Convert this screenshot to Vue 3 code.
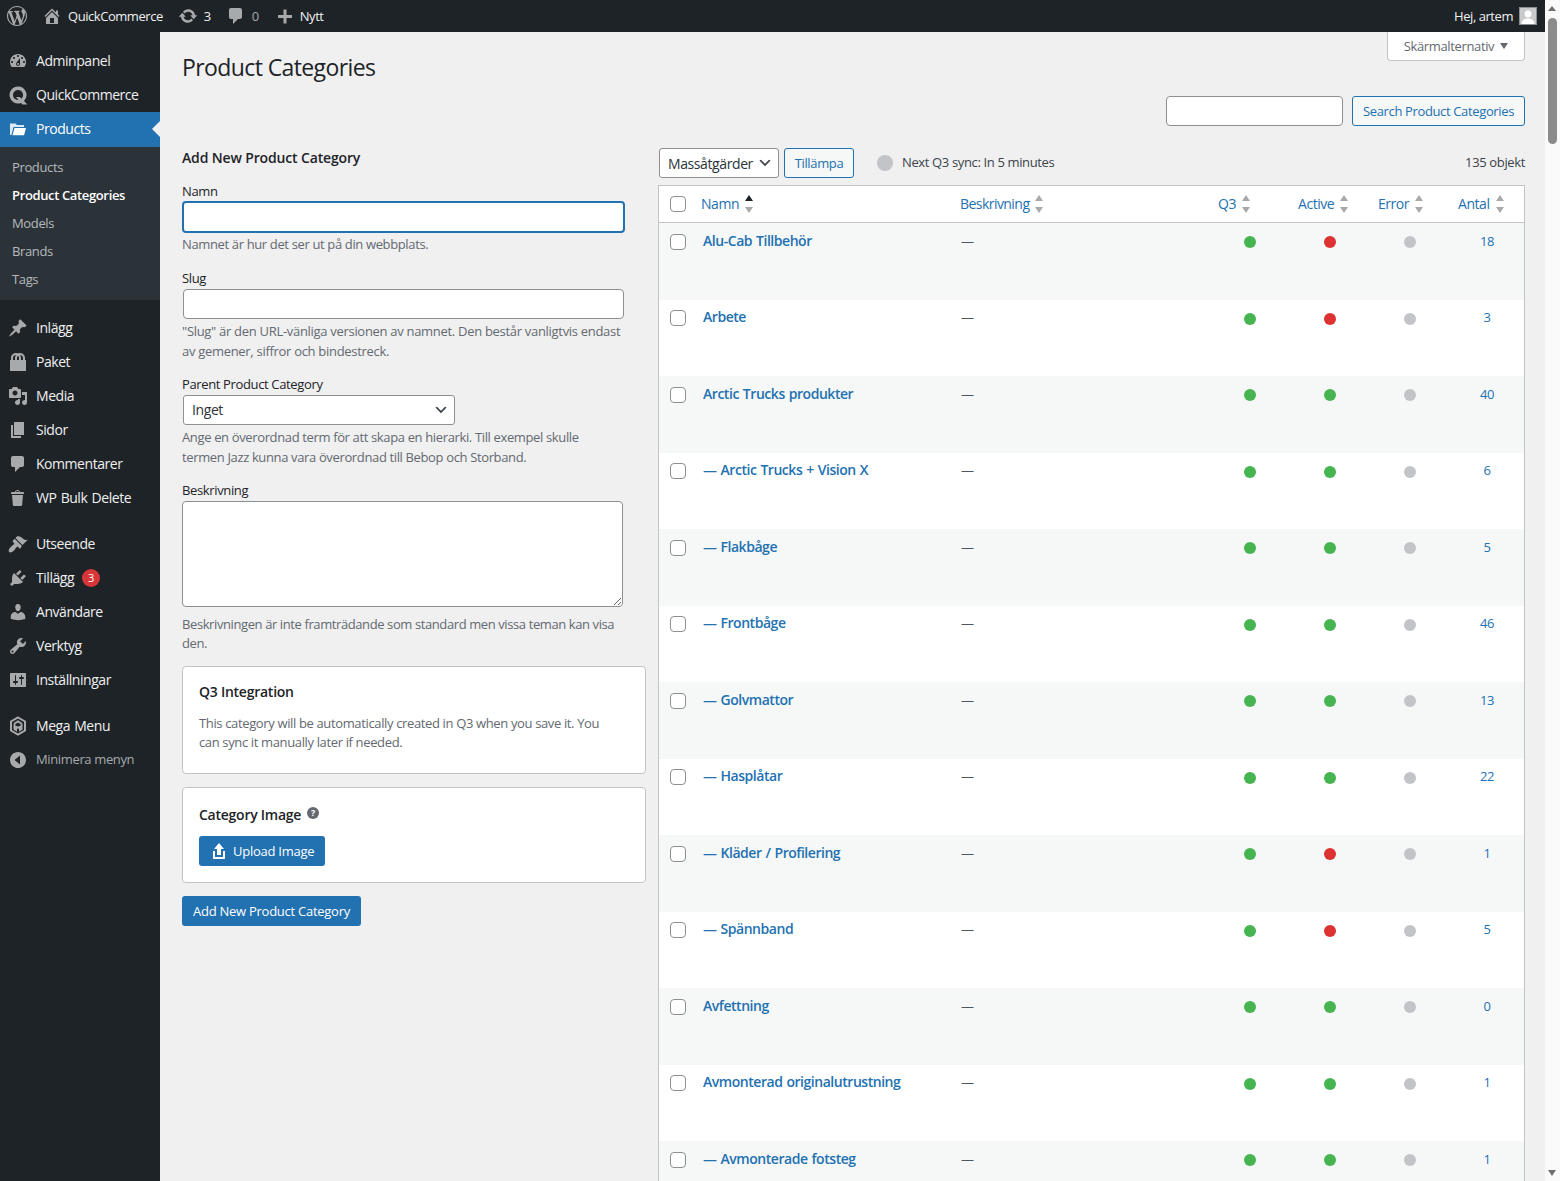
<script setup>
const P = {
  dash: "M3.76 16h12.48c1.1-1.37 1.76-3.11 1.76-5 0-4.42-3.58-8-8-8s-8 3.58-8 8c0 1.89.66 3.63 1.76 5zM10 4c.55 0 1 .45 1 1s-.45 1-1 1-1-.45-1-1 .45-1 1-1zM6 6c.55 0 1 .45 1 1s-.45 1-1 1-1-.45-1-1 .45-1 1-1zm8 0c.55 0 1 .45 1 1s-.45 1-1 1-1-.45-1-1 .45-1 1-1zm-5.37 5.55L12 7v6c0 1.1-.9 2-2 2s-2-.9-2-2c0-.57.24-1.08.63-1.45zM4 10c.55 0 1 .45 1 1s-.45 1-1 1-1-.45-1-1 .45-1 1-1zm12 0c.55 0 1 .45 1 1s-.45 1-1 1-1-.45-1-1 .45-1 1-1zm-5 3c0-.55-.45-1-1-1s-1 .45-1 1 .45 1 1 1 1-.45 1-1z",
  pin: "M10.44 3.02l1.82-1.82 6.36 6.35-1.83 1.82c-1.05-.68-2.48-.57-3.41.36l-.75.75c-.92.93-1.04 2.35-.35 3.41l-1.83 1.82-2.41-2.41-2.8 2.79c-.42.42-3.38 2.71-3.8 2.29s1.86-3.39 2.28-3.81l2.79-2.79L4.1 9.36l1.83-1.82c1.05.69 2.48.57 3.4-.36l.75-.75c.93-.92 1.05-2.35.36-3.41z",
  bag: "M17 8h1v11H2V8h1V6c0-2.76 2.24-5 5-5 .71 0 1.39.15 2 .42.61-.27 1.29-.42 2-.42 2.76 0 5 2.24 5 5v2zM5 6v2h2V6c0-1.13.39-2.16 1.02-3H8C6.35 3 5 4.35 5 6zm10 2V6c0-1.65-1.35-3-3-3h-.02c.63.84 1.02 1.87 1.02 3v2h2zm-5-4.22C9.39 4.33 9 5.12 9 6v2h2V6c0-.88-.39-1.67-1-2.22z",
  media: "M13 11V4c0-.55-.45-1-1-1h-1.67L9 1H5L3.67 3H2c-.55 0-1 .45-1 1v7c0 .55.45 1 1 1h10c.55 0 1-.45 1-1zM7 4.5c1.38 0 2.5 1.12 2.5 2.5S8.38 9.5 7 9.5 4.5 8.38 4.5 7 5.62 4.5 7 4.5zM14 6h5v10.5c0 1.38-1.12 2.5-2.5 2.5S14 17.88 14 16.5s1.12-2.5 2.5-2.5c.17 0 .34.02.5.05V9h-3V6zm-4 8.05V13h2v3.5c0 1.38-1.12 2.5-2.5 2.5S7 17.88 7 16.5 8.12 14 9.5 14c.17 0 .34.02.5.05z",
  page: "M6 15V2h10v13H6zm-1 1h8v2H3V5h2v11z",
  comment: "M5 2h9c1.1 0 2 .9 2 2v7c0 1.1-.9 2-2 2h-2l-5 5v-5H5c-1.1 0-2-.9-2-2V4c0-1.1.9-2 2-2z",
  trash: "M12 4h3c.6 0 1 .4 1 1v1H3V5c0-.6.5-1 1-1h3c.2-1.1 1.3-2 2.5-2s2.3.9 2.5 2zM8 4h3c-.2-.6-.9-1-1.5-1S8.2 3.4 8 4zM4 7h11l-.9 10.1c0 .5-.5.9-1 .9H5.9c-.5 0-.9-.4-1-.9L4 7z",
  brush: "M14.48 11.06L7.41 3.99l1.5-1.5c.5-.56 2.3-.47 3.51.32 1.21.8 1.43 1.28 2.91 2.1 1.18.64 2.45 1.26 4.45.85zm-.71.71L6.7 4.7 4.93 6.47c-.39.39-.39 1.02 0 1.41l1.06 1.06c.39.39.39 1.03 0 1.42-.6.6-1.43 1.11-2.21 1.69-.35.26-.7.53-1.01.84-1.34 1.35-2.77 3.13-1.77 5.12.04.04.07.07.1.1 1.99 1 3.77-.43 5.12-1.77.31-.31.58-.66.84-1.01.58-.78 1.09-1.61 1.69-2.21.39-.39 1.03-.39 1.42 0l1.06 1.06c.39.39 1.02.39 1.41 0z",
  plug: "M13.11 4.36L9.87 7.6 8 5.73l3.24-3.24c.35-.34 1.05-.2 1.56.32.52.51.66 1.21.31 1.55zm-8 1.77l.91-1.12 9.01 9.01-1.19.84c-.71.71-2.63 1.16-3.82 1.16H6.14L4.9 17.26c-.59.59-1.54.59-2.12 0-.59-.58-.59-1.53 0-2.12l1.24-1.24v-3.88c0-1.13.4-3.19 1.09-3.89zm7.26 3.97l3.24-3.24c.34-.35 1.04-.21 1.55.31.52.51.66 1.21.31 1.55l-3.24 3.25z",
  user: "M10 9.25c-2.27 0-2.73-3.44-2.73-3.44C7 4.02 7.82 2 9.97 2c2.16 0 2.98 2.02 2.71 3.81 0 0-.41 3.44-2.68 3.44zm0 2.57L12.72 10c2.39 0 4.52 2.33 4.52 4.53v2.49s-3.65 1.13-7.24 1.13c-3.65 0-7.24-1.13-7.24-1.13v-2.49c0-2.25 1.94-4.48 4.47-4.48z",
  tools: "M16.68 9.77c-1.34 1.34-3.3 1.67-4.95.99l-5.41 6.52c-.99.99-2.59.99-3.58 0s-.99-2.59 0-3.57l6.52-5.42c-.68-1.65-.35-3.61.99-4.95 1.28-1.28 3.12-1.62 4.72-1.06l-2.89 2.89 2.82 2.82 2.86-2.87c.53 1.58.18 3.39-1.08 4.65zM3.81 16.21c.4.39 1.04.39 1.43 0 .4-.4.4-1.04 0-1.43-.39-.4-1.03-.4-1.43 0-.39.39-.39 1.03 0 1.43z",
  settings: "M18 16V4c0-.55-.45-1-1-1H3c-.55 0-1 .45-1 1v12c0 .55.45 1 1 1h14c.55 0 1-.45 1-1zM8 11h1c.55 0 1 .45 1 1s-.45 1-1 1H8v1.5c0 .28-.22.5-.5.5s-.5-.22-.5-.5V13H6c-.55 0-1-.45-1-1s.45-1 1-1h1V5.5c0-.28.22-.5.5-.5s.5.22.5.5V11zm5-2h-1c-.55 0-1-.45-1-1s.45-1 1-1h1V5.5c0-.28.22-.5.5-.5s.5.22.5.5V7h1c.55 0 1 .45 1 1s-.45 1-1 1h-1v5.5c0 .28-.22.5-.5.5s-.5-.22-.5-.5V9z",
  collapse: "M18 10c0-4.42-3.58-8-8-8s-8 3.58-8 8 3.58 8 8 8 8-3.58 8-8zm-6 4.5L6.5 10 12 5.5v9z",
  wp: "M20 10c0-5.51-4.49-10-10-10C4.48 0 0 4.49 0 10c0 5.52 4.48 10 10 10 5.51 0 10-4.48 10-10zM7.78 15.37L4.37 6.22c.55-.02 1.17-.08 1.17-.08.5-.06.44-1.13-.06-1.11 0 0-1.45.11-2.37.11-.18 0-.37 0-.58-.01C4.12 2.69 6.87 1.11 10 1.11c2.33 0 4.45.87 6.05 2.34-.68-.11-1.65.39-1.65 1.58 0 .74.45 1.36.9 2.1.35.61.55 1.36.55 2.46 0 1.49-1.4 5-1.4 5l-3.03-8.37c.54-.02.82-.17.82-.17.5-.05.44-1.25-.06-1.22 0 0-1.44.12-2.38.12-.87 0-2.33-.12-2.33-.12-.5-.03-.56 1.2-.06 1.22l.92.08 1.26 3.41zM17.41 10c.24-.64.74-1.87.43-4.25.7 1.29 1.05 2.71 1.05 4.25 0 3.29-1.73 6.24-4.4 7.78.97-2.59 1.94-5.2 2.92-7.78zM6.1 18.09C3.12 16.65 1.11 13.53 1.11 10c0-1.3.23-2.48.72-3.59C3.25 10.3 4.67 14.2 6.1 18.09zm4.03-6.63l2.58 6.98c-.86.29-1.76.45-2.71.45-.79 0-1.57-.11-2.29-.33.81-2.38 1.62-4.74 2.42-7.1z",
  home: "M16 8.5l1.53 1.53-1.06 1.06L10 4.62l-6.47 6.47-1.06-1.06L10 2.5l4 4v-2h2v4zm-6-2.46l6 5.99V18H4v-5.97zM12 17v-5H8v5h4z",
  update: "M10.2 3.28c3.53 0 6.43 2.61 6.92 6h2.08l-3.5 4-3.5-4h2.32c-.45-1.97-2.21-3.45-4.32-3.45-1.45 0-2.73.71-3.54 1.78L4.95 5.66C6.23 4.2 8.11 3.28 10.2 3.28zm-.4 13.44c-3.52 0-6.43-2.61-6.92-6H.8l3.5-4c1.17 1.33 2.33 2.67 3.5 4H5.48c.45 1.97 2.21 3.45 4.32 3.45 1.45 0 2.73-.71 3.54-1.78l1.71 1.95c-1.28 1.46-3.15 2.38-5.25 2.38z",
  plus: "M17 9v3h-5.5v5.5h-3V12H3V9h5.5V3.5h3V9H17z",
  upload: "M8 14V8H5l5-6 5 6h-3v6H8zm-2 2v-6H4v8h12.01v-8H14v6H6z",
}
const menuA = [
  { t: 'Adminpanel', i: 'dash' },
  { t: 'QuickCommerce', q: true },
]
const sub = ['Products', 'Product Categories', 'Models', 'Brands', 'Tags']
const menuB = [
  { t: 'Inlägg', i: 'pin' }, { t: 'Paket', i: 'bag' }, { t: 'Media', i: 'media' },
  { t: 'Sidor', i: 'page' }, { t: 'Kommentarer', i: 'comment' }, { t: 'WP Bulk Delete', i: 'trash' },
]
const menuC = [
  { t: 'Utseende', i: 'brush' }, { t: 'Tillägg', i: 'plug', badge: 3 }, { t: 'Användare', i: 'user' },
  { t: 'Verktyg', i: 'tools' }, { t: 'Inställningar', i: 'settings' },
]
const rows = [
  ['Alu-Cab Tillbehör', 0, 18], ['Arbete', 0, 3], ['Arctic Trucks produkter', 1, 40],
  ['— Arctic Trucks + Vision X', 1, 6], ['— Flakbåge', 1, 5], ['— Frontbåge', 1, 46],
  ['— Golvmattor', 1, 13], ['— Hasplåtar', 1, 22], ['— Kläder / Profilering', 0, 1],
  ['— Spännband', 0, 5], ['Avfettning', 1, 0], ['Avmonterad originalutrustning', 1, 1],
  ['— Avmonterade fotsteg', 1, 1],
].map(([name, active, count]) => ({ name, active, count }))
const heads = [
  { t: 'Beskrivning', c: 'h-desc' }, { t: 'Q3', c: 'h-s' }, { t: 'Active', c: 'h-s' },
  { t: 'Error', c: 'h-s' }, { t: 'Antal', c: 'h-s' },
]
</script>

<template>
  <div class="shell">
    <header class="bar">
      <div class="bar-left">
        <svg class="wp" viewBox="0 0 20 20"><path :d="P.wp" /></svg>
        <svg class="bi home" viewBox="0 0 20 20"><path :d="P.home" /></svg>
        <span class="bt site">QuickCommerce</span>
        <svg class="bi upd" viewBox="0 0 20 20"><path :d="P.update" /></svg>
        <span class="bt n3">3</span>
        <svg class="bi cmt" viewBox="0 0 20 20"><path :d="P.comment" /></svg>
        <span class="bt n0">0</span>
        <svg class="bi pls" viewBox="0 0 20 20"><path :d="P.plus" /></svg>
        <span class="bt">Nytt</span>
      </div>
      <div class="bar-right">
        <span class="bt">Hej, artem</span>
        <span class="avatar">
          <svg viewBox="0 0 16 16"><rect width="16" height="16" fill="#c9cacc" /><circle cx="8" cy="6" r="3.4" fill="#fff" /><path d="M1.5 16c.3-4 3-5.6 6.5-5.6s6.200 1.600 6.500 5.600z" fill="#fff" /></svg>
        </span>
      </div>
    </header>

    <div class="body">
      <nav class="side">
        <a v-for="m in menuA" :key="m.t" class="mi">
          <svg v-if="m.i" class="mic" viewBox="0 0 20 20"><path :d="P[m.i]" /></svg>
          <svg v-else class="mic" viewBox="0 0 20 20"><path fill-rule="evenodd" d="M10 1.500a8.500 8.500 0 1 0 3 16.450l1.500 1.550h4.800l-3.300-3.500A8.500 8.500 0 0 0 10 1.500zm0 3.500a5 5 0 0 1 3.400 8.700l-1.600-1.700H8l2.500 3H10a5 5 0 0 1 0-10z" /></svg>
          <span>{{ m.t }}</span>
        </a>
        <a class="mi cur">
          <svg class="mic" viewBox="0 0 20 20"><path opacity=".85" d="M2 3.500h5.500L9 5h7v2H5.500L3.500 15H2z" /><path d="M6.500 8H18l-2 7.300H4.500z" /></svg>
          <span>Products</span>
        </a>
        <ul class="sub">
          <li v-for="s in sub" :key="s" :class="{ on: s === 'Product Categories' }">{{ s }}</li>
        </ul>
        <div class="group g1">
          <a v-for="m in menuB" :key="m.t" class="mi">
            <svg class="mic" viewBox="0 0 20 20"><path :d="P[m.i]" /></svg>
            <span>{{ m.t }}</span>
          </a>
        </div>
        <div class="group">
          <a v-for="m in menuC" :key="m.t" class="mi">
            <svg class="mic" viewBox="0 0 20 20"><path :d="P[m.i]" /></svg>
            <span>{{ m.t }}</span>
            <b v-if="m.badge" class="badge">{{ m.badge }}</b>
          </a>
        </div>
        <div class="group">
          <a class="mi">
            <svg class="mic" viewBox="0 0 20 20">
              <path fill="none" stroke="#a7aaad" stroke-width="2" d="M10 1.500l7 4v9l-7 4-7-4v-9z" />
              <path fill="none" stroke="#a7aaad" stroke-width="2" d="M6.500 7.500l3.500-2 3.500 2M6.500 7.500v5.500l1.500 1v-3.500l2 1.300 2-1.300V14l1.500-1V7.500" />
            </svg>
            <span>Mega Menu</span>
          </a>
          <a class="mi fold">
            <svg class="mic" viewBox="0 0 20 20"><path :d="P.collapse" /></svg>
            <span>Minimera menyn</span>
          </a>
        </div>
      </nav>

      <main class="main">
        <button class="screen">Skärmalternativ <i class="tri"></i></button>
        <h1>Product Categories</h1>
        <div class="search">
          <input class="inp s-inp" />
          <button class="btn">Search Product Categories</button>
        </div>
        <div class="cols">
          <section class="form">
            <h2>Add New Product Category</h2>
            <label class="l-name">Namn</label>
            <input class="inp focus" />
            <p class="hint h1a">Namnet är hur det ser ut på din webbplats.</p>
            <label class="l-slug">Slug</label>
            <input class="inp slug" />
            <p class="hint h2a">"Slug" är den URL-vänliga versionen av namnet. Den består vanligtvis endast av gemener, siffror och bindestreck.</p>
            <label class="l-par">Parent Product Category</label>
            <div class="sel parent"><span>Inget</span><svg viewBox="0 0 20 20"><path d="M5 6l5 5 5-5 2 1-7 7-7-7z" /></svg></div>
            <p class="hint h3a">Ange en överordnad term för att skapa en hierarki. Till exempel skulle termen Jazz kunna vara överordnad till Bebop och Storband.</p>
            <label class="l-desc">Beskrivning</label>
            <textarea class="ta"></textarea>
            <p class="hint h4a">Beskrivningen är inte framträdande som standard men vissa teman kan visa den.</p>

            <div class="card q3">
              <h3>Q3 Integration</h3>
              <p>This category will be automatically created in Q3 when you save it. You can sync it manually later if needed.</p>
            </div>
            <div class="card img">
              <h3>Category Image <i class="help">?</i></h3>
              <button class="primary up">
                <svg viewBox="0 0 20 20"><path :d="P.upload" /></svg>Upload Image
              </button>
            </div>
            <button class="primary add">Add New Product Category</button>
          </section>

          <section class="list">
            <div class="tools">
              <div class="sel bulk"><span>Massåtgärder</span><svg viewBox="0 0 20 20"><path d="M5 6l5 5 5-5 2 1-7 7-7-7z" /></svg></div>
              <button class="btn apply">Tillämpa</button>
              <i class="sync"></i>
              <span class="synct">Next Q3 sync: In 5 minutes</span>
              <span class="count">135 objekt</span>
            </div>
            <div class="table">
              <div class="tr th">
                <span class="cell"><i class="cb"></i></span>
                <span class="hd h-name">Namn<i class="arrows first"></i></span>
                <span v-for="h in heads" :key="h.t" class="hd" :class="h.c">{{ h.t }}<i class="arrows"></i></span>
              </div>
              <div v-for="(r, i) in rows" :key="r.name" class="tr td" :class="{ odd: i % 2 === 0 }">
                <span class="cell rowcb"><i class="cb"></i></span>
                <a class="nm">{{ r.name }}</a>
                <span class="ds">—</span>
                <span class="dc"><i class="dot green"></i></span>
                <span class="dc"><i class="dot" :class="r.active ? 'green' : 'red'"></i></span>
                <span class="dc"><i class="dot grey"></i></span>
                <span class="ct">{{ r.count }}</span>
              </div>
            </div>
          </section>
        </div>
      </main>
    </div>

    <aside class="scroll">
      <i class="up-a"></i>
      <i class="thumb"></i>
      <i class="down-a"></i>
    </aside>
  </div>
</template>

<style>
html, body { margin: 0; height: 100%; overflow: hidden; background: #f0f0f1; }
</style>

<style scoped>
.shell {
  position: relative;
  width: 1560px; height: 1181px; overflow: hidden;
  font-family: "Open Sans", "Noto Sans", sans-serif;
  font-size: 13px; color: #3c434a; background: #f0f0f1;
  letter-spacing: -0.36px;
}
svg { fill: currentColor; display: block; flex: none; }
h1, h2, h3, p, ul { margin: 0; padding: 0; }
button { font: inherit; letter-spacing: inherit; cursor: pointer; }
i { font-style: normal; }

.bar {
  width: 1545px; height: 32px; background: #1d2327; color: #f0f0f1;
  display: flex; justify-content: space-between; align-items: center;
  letter-spacing: -0.45px;
}
.bar-left, .bar-right { display: flex; align-items: center; }
.bt { line-height: 32px; }
.wp { width: 20px; height: 20px; margin-left: 7px; color: #a7aaad; }
.bi { width: 20px; height: 20px; color: #a7aaad; }
.home { margin-left: 15px; margin-right: 6px; }
.upd { margin-left: 15px; margin-right: 6px; }
.cmt { margin-left: 15px; margin-right: 6px; }
.n0 { color: #a7aaad; }
.pls { margin-left: 16px; margin-right: 5px; }
.bar-right { padding-right: 8px; gap: 6px; }
.avatar { width: 16px; height: 16px; border: 1px solid #8c8f94; display: block; }
.avatar svg { width: 16px; height: 16px; }

.body { display: flex; width: 1545px; height: 1149px; }
.side { width: 160px; flex: none; background: #1d2327; color: #f0f0f1; padding-top: 12px; box-sizing: border-box; letter-spacing: -0.45px; word-spacing: 1px; }
.mi {
  display: flex; align-items: center; height: 34px; font-size: 14px; position: relative;
}
.mi span { margin-top: -2px; }
.mic { width: 20px; height: 20px; margin: 0 8px 0 8px; color: #a7aaad; }
.cur { background: #2271b1; color: #fff; height: 35px; }
.cur .mic { color: #fff; }
.cur::after {
  content: ""; position: absolute; right: 0; top: 9px;
  border: 8px solid transparent; border-right-color: #f0f0f1; border-left-width: 0;
}
.sub { list-style: none; background: #2c3338; padding: 6px 0 7px; }
.sub li { height: 28px; line-height: 28px; padding-left: 12px; color: #b4b9be; font-size: 13px; letter-spacing: -0.36px; word-spacing: 0; }
.sub li.on { color: #fff; font-weight: 600; }
.group { margin-top: 12px; }
.g1 { margin-top: 11px; }
.badge {
  width: 18px; height: 18px; border-radius: 50%; background: #d63638; color: #fff;
  font-size: 11px; font-weight: 400; text-align: center; line-height: 18px; margin-left: 8px; letter-spacing: 0;
}
.fold { color: #a7aaad; font-size: 13px; letter-spacing: -0.36px; word-spacing: 0; }

.main { flex: 1; position: relative; padding: 0 20px 0 22px; min-width: 0; }
.screen {
  position: absolute; right: 20px; top: 0; height: 29px; width: 138px;
  background: #fff; border: 1px solid #c3c4c7; border-top: 0; border-radius: 0 0 4px 4px;
  color: #646970; display: flex; align-items: center; justify-content: center; gap: 6px;
}
.tri { border: 4.500px solid transparent; border-top: 6px solid #646970; border-bottom: 0; margin-left: 0; }
h1 { font-size: 23px; font-weight: 400; color: #1d2327; line-height: 30px; padding-top: 20px; letter-spacing: -0.6px; }
.search { display: flex; justify-content: flex-end; gap: 9px; margin-top: 14px; }
.inp {
  display: block; box-sizing: border-box; background: #fff; border: 1px solid #8c8f94;
  border-radius: 4px; height: 30px; padding: 0;
}
.s-inp { width: 177px; }
.btn {
  height: 30px; box-sizing: border-box; border: 1px solid #2271b1; color: #2271b1;
  background: #f6f7f7; border-radius: 3px; padding: 0 10px;
}

.cols { display: flex; margin-top: 22px; }
.form { width: 464px; flex: none; margin-right: 12px; }
h2 { font-size: 14px; font-weight: 600; color: #1d2327; line-height: 20px; letter-spacing: -0.15px; }
label { display: block; color: #1d2327; line-height: 18px; }
.l-name { margin-top: 14px; }
.focus { width: 443px; height: 32px; margin-top: 1px; border: 2px solid #2271b1; }
.hint { color: #646970; line-height: 19.500px; }
.h1a { margin-top: 2px; }
.l-slug { margin-top: 14px; }
.slug { width: 441px; margin: 2px 0 0 1px; }
.h2a { margin-top: 2px; width: 443px; line-height: 20px; letter-spacing: -0.3px; }
.l-par { margin-top: 14px; }
.sel {
  box-sizing: border-box; height: 30px; background: #fff; border: 1px solid #8c8f94; border-radius: 3px;
  display: flex; align-items: center; justify-content: space-between; padding: 0 5px 0 8px;
  color: #2c3338; font-size: 14px; letter-spacing: -0.4px;
}
.sel svg { width: 16px; height: 16px; color: #3c434a; }
.parent { width: 272px; margin: 2px 0 0 1px; }
.h3a { margin-top: 2px; width: 410px; line-height: 20px; }
.l-desc { margin-top: 14px; }
.ta {
  display: block; box-sizing: border-box; width: 441px; height: 106px; margin: 2px 0 0; padding: 0;
  background: #fff; border: 1px solid #8c8f94; border-radius: 4px;
}
.h4a { margin-top: 8px; width: 443px; letter-spacing: -0.4px; }
.card { box-sizing: border-box; width: 464px; background: #fff; border: 1px solid #c3c4c7; border-radius: 4px; padding: 0 16px; }
.card h3 { font-size: 14px; font-weight: 600; color: #1d2327; line-height: 20px; letter-spacing: -0.25px; }
.q3 { height: 108px; margin-top: 12px; padding-top: 15px; }
.q3 p { color: #646970; line-height: 19px; margin-top: 12px; max-width: 415px; }
.img { height: 96px; margin-top: 13px; padding-top: 17px; }
.img h3 { display: flex; align-items: flex-start; }
.help {
  width: 12px; height: 12px; border-radius: 50%; background: #646970; color: #fff;
  font-size: 9px; line-height: 12px; text-align: center; font-weight: 700; margin-left: 6px; margin-top: 2px; letter-spacing: 0;
}
.primary {
  height: 30px; background: #2271b1; color: #fff; border: 0; border-radius: 3px; display: flex; align-items: center;
  letter-spacing: -0.26px;
}
.up { margin-top: 11px; width: 126px; padding: 0 0 0 10px; }
.up svg { width: 20px; height: 20px; margin-right: 4px; }
.add { margin-top: 13px; width: 179px; padding: 0; justify-content: center; }

.list { flex: 1; min-width: 0; }
.tools { display: flex; align-items: center; height: 30px; position: relative; padding-left: 1px; }
.bulk { width: 120px; }
.apply { margin-left: 5px; width: 70px; padding: 0; }
.sync { width: 16px; height: 16px; border-radius: 50%; background: #c3c4c7; margin-left: 23px; }
.synct { margin-left: 9px; margin-top: -2px; }
.count { margin-left: auto; margin-top: -2px; }
.table { margin-top: 7px; border: 1px solid #c3c4c7; border-bottom: 0; background: #fff; width: 867px; box-sizing: border-box; }
.tr { display: grid; grid-template-columns: 32px 261px 258px 80px 80px 80px 1fr; }
.th { height: 36px; align-items: center; border-bottom: 1px solid #c3c4c7; }
.td { height: 76.500px; align-items: start; padding-top: 9px; box-sizing: border-box; }
.odd { background: #f6f7f7; }
.cell { display: flex; justify-content: center; padding-left: 6px; }
.rowcb { margin-top: 1.600px; }
.cb { width: 16px; height: 16px; box-sizing: border-box; background: #fff; border: 1px solid #8c8f94; border-radius: 4px; display: block; }
.hd { color: #2271b1; display: flex; align-items: center; padding: 0 0 2px 10px; font-size: 14px; letter-spacing: -0.45px; }
.h-s { padding-left: 8px; }
.h-desc { padding-left: 8px; letter-spacing: -0.55px; }
.arrows { width: 9px; height: 16px; margin: 2px 0 0 6px; position: relative; display: block; }
.arrows::before, .arrows::after {
  content: ""; position: absolute; left: 0; border: 4.500px solid transparent;
}
.arrows::before { top: -1px; border-bottom: 6px solid #a7aaad; border-top: 0; }
.arrows::after { bottom: -1px; border-top: 6px solid #a7aaad; border-bottom: 0; }
.arrows.first::before { border-bottom-color: #1d2327; }
.nm { color: #2271b1; font-weight: 600; font-size: 14px; line-height: 20px; padding-left: 12px; margin-top: -1.300px; letter-spacing: -0.46px; word-spacing: 0.8px; }
.ds { padding-left: 9px; line-height: 20px; color: #50575e; margin-top: -1.300px; }
.dc { display: flex; justify-content: center; padding-top: 4px; }
.dot { width: 12px; height: 12px; border-radius: 50%; display: block; }
.green { background: #46b450; }
.red { background: #dc3232; }
.grey { background: #c3c4c7; }
.ct { color: #2271b1; text-align: center; line-height: 20px; margin-top: -1.300px; }

.scroll { position: absolute; right: 0; top: 0; width: 15px; height: 1181px; background: #fafafa; }
.up-a, .down-a { position: absolute; left: 3px; border: 4.500px solid transparent; }
.up-a { top: 6px; border-bottom: 5px solid #6e6e6e; border-top: 0; }
.down-a { bottom: 5px; border-top: 6px solid #6e6e6e; border-bottom: 0; }
.thumb { position: absolute; left: 3px; top: 18px; width: 9px; height: 126px; border-radius: 4.500px; background: #8b8b8b; }
</style>
